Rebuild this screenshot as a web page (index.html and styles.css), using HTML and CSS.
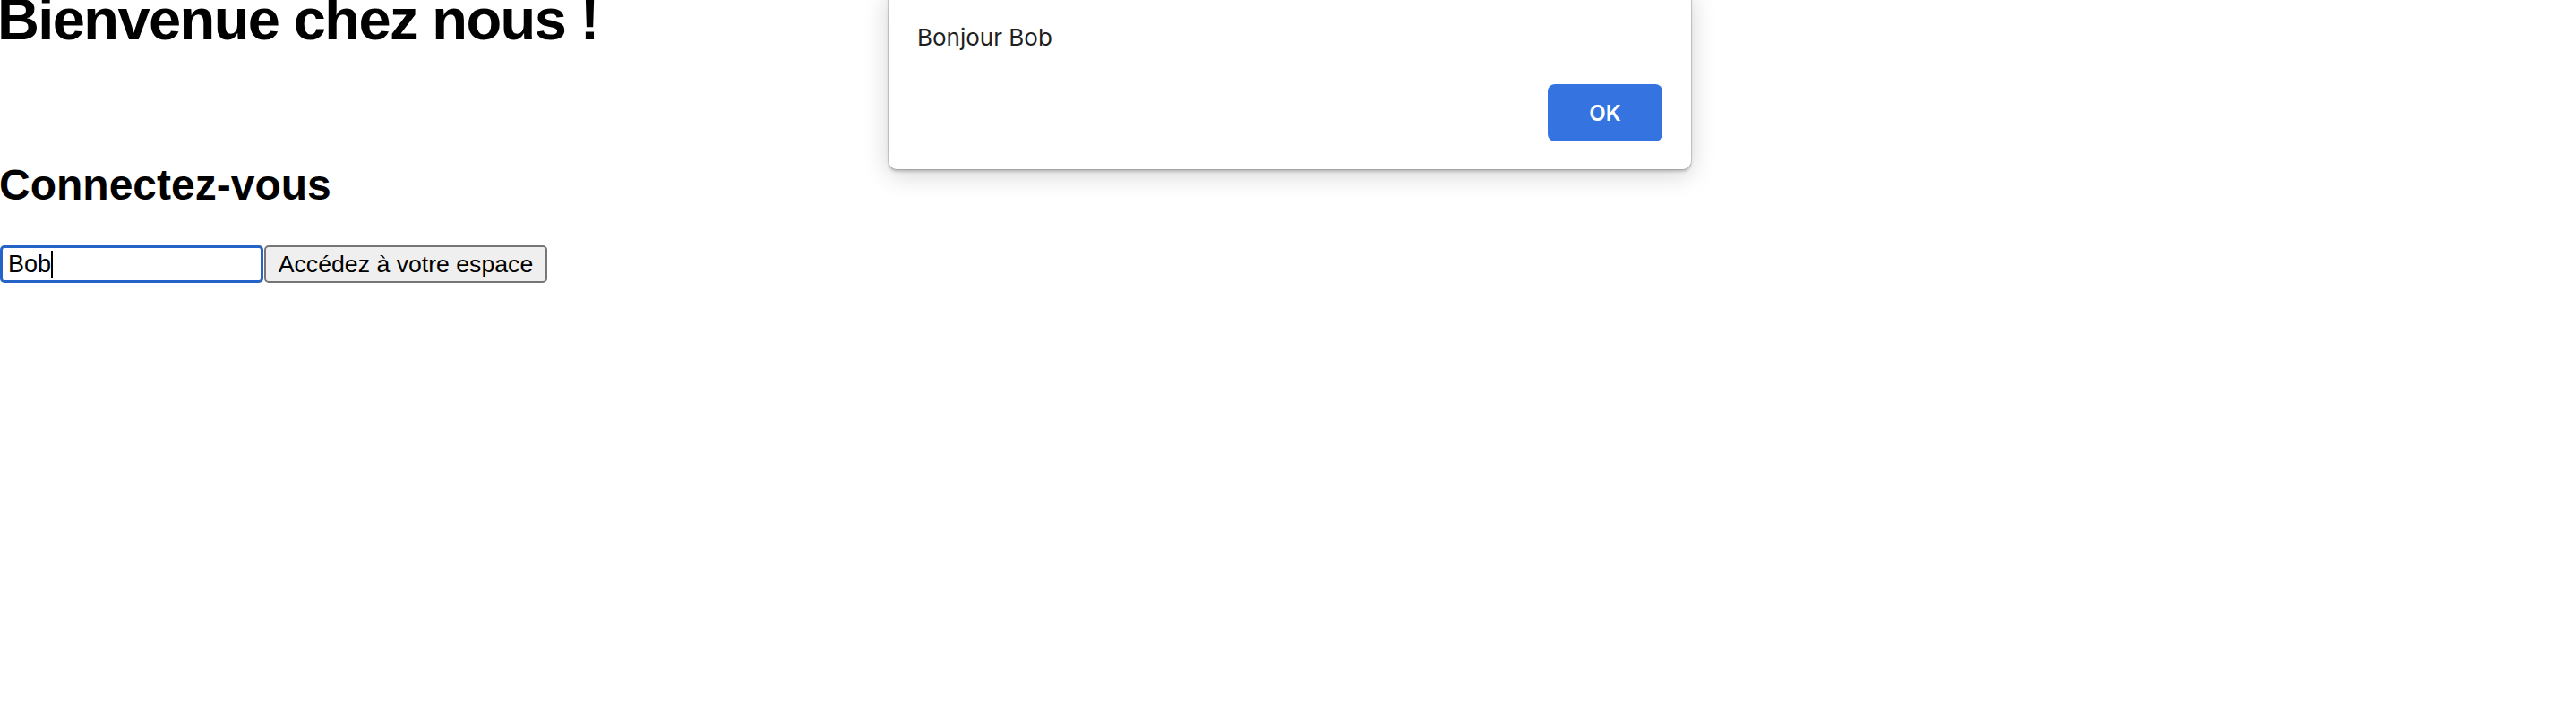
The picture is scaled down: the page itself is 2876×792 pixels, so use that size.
FILE: index.html
```html
<!DOCTYPE html>
<html lang="fr">
<head>
<meta charset="utf-8">
<title>Bienvenue</title>
<link rel="stylesheet" href="styles.css">
</head>
<body>
<main class="page">
  <h1 class="title">Bienvenue chez nous !</h1>
  <h2 class="subtitle">Connectez-vous</h2>
  <form class="login">
    <div class="field"><span class="field-text">Bob</span><span class="caret"></span></div>
    <button type="button" class="submit">Accédez à votre espace</button>
  </form>
</main>
<div class="dialog">
  <p class="dialog-message">Bonjour Bob</p>
  <div class="dialog-actions">
    <button type="button" class="dialog-ok">OK</button>
  </div>
</div>
</body>
</html>
```
FILE: styles.css
```css
html, body {
  margin: 0;
  padding: 0;
  background: #ffffff;
}
body {
  width: 2876px;
  height: 792px;
  overflow: hidden;
  position: relative;
  font-family: "Liberation Sans", Arial, sans-serif;
  color: #000;
}
.page {
  display: flex;
  flex-direction: column;
  align-items: flex-start;
}
.title {
  font-size: 65px;
  font-weight: 700;
  line-height: 74px;
  letter-spacing: -1.6px;
  margin: -15px 0 0 -3px;
}
.subtitle {
  font-size: 48px;
  font-weight: 700;
  line-height: 55px;
  margin: 120px 0 0 -1px;
}
.login {
  display: flex;
  align-items: stretch;
  gap: 1px;
  margin-top: 40px;
}
.field {
  box-sizing: border-box;
  width: 294px;
  height: 42px;
  border: 3px solid #2563c9;
  border-radius: 5px;
  padding: 0 6px;
  display: flex;
  align-items: center;
  font-size: 27px;
  background: #fff;
}
.caret {
  display: inline-block;
  width: 2px;
  height: 30px;
  background: #000;
}
.submit {
  box-sizing: border-box;
  width: 316px;
  height: 42px;
  font-family: "Liberation Sans", Arial, sans-serif;
  font-size: 26.67px;
  color: #000;
  background: #efefef;
  border: 2px solid #767676;
  border-radius: 5px;
  padding: 0;
  white-space: nowrap;
  text-align: center;
}
.dialog {
  position: absolute;
  left: 992px;
  top: -12px;
  width: 896px;
  box-sizing: border-box;
  padding: 38px 32px 31px 32px;
  background: #fff;
  border-radius: 9px;
  box-shadow: 0 0 0 1px rgba(0,0,0,0.12), 0 3px 3px rgba(0,0,0,0.18), 0 6px 28px rgba(0,0,0,0.18);
  font-family: Inter, "Noto Sans", sans-serif;
}
.dialog-message {
  margin: 0;
  font-size: 26px;
  line-height: 32px;
  color: #1f1f1f;
}
.dialog-actions {
  display: flex;
  justify-content: flex-end;
  margin-top: 36px;
}
.dialog-ok {
  width: 128px;
  height: 64px;
  border: none;
  border-radius: 8px;
  background: #3574e0;
  color: #fff;
  font-family: Inter, "Noto Sans", sans-serif;
  font-size: 24px;
  font-weight: 600;
}
```
